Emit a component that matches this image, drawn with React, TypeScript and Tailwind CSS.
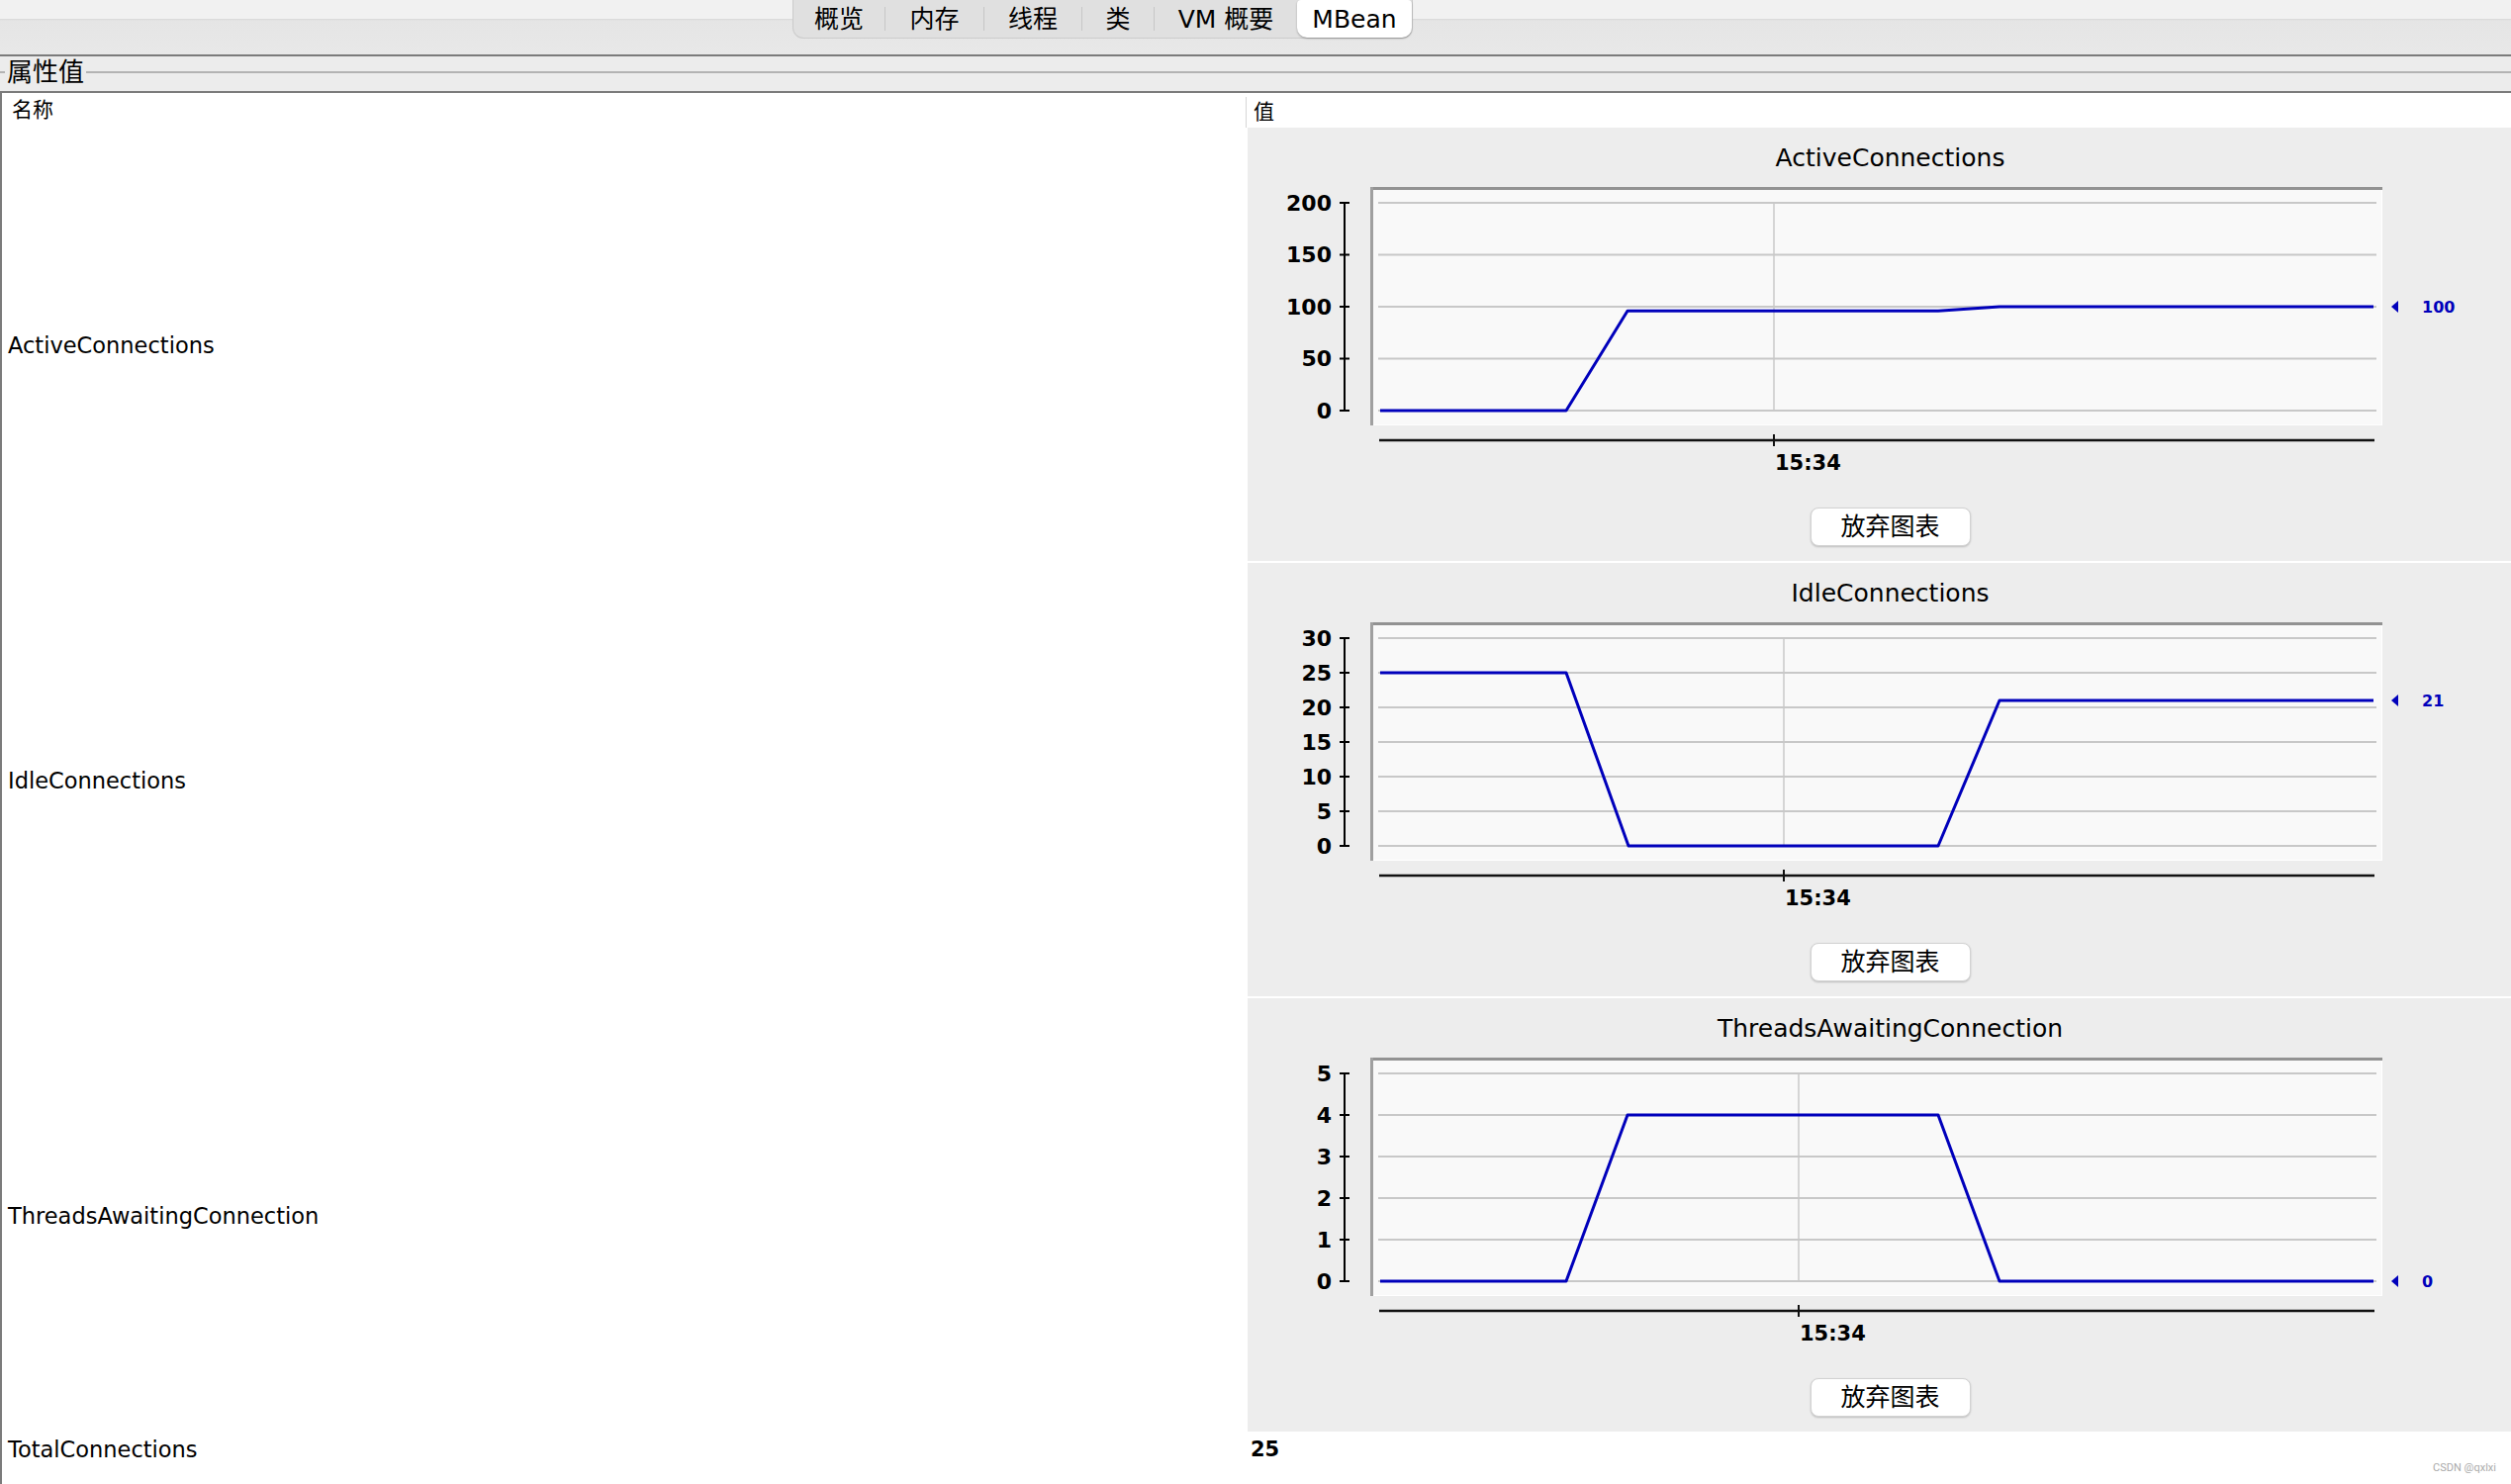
type Chart = {
  title: string;
  max: number;
  ticks: number[];
  vx: number;
  pts: [number, number][];
  last: string;
};

const charts: Chart[] = [
  {
    title: 'ActiveConnections',
    max: 200,
    ticks: [200, 150, 100, 50, 0],
    vx: 532,
    pts: [[134, 0], [322, 0], [384, 96], [698, 96], [760, 100], [1138, 100]],
    last: '100',
  },
  {
    title: 'IdleConnections',
    max: 30,
    ticks: [30, 25, 20, 15, 10, 5, 0],
    vx: 542,
    pts: [[134, 25], [322, 25], [385, 0], [698, 0], [760, 21], [1138, 21]],
    last: '21',
  },
  {
    title: 'ThreadsAwaitingConnection',
    max: 5,
    ticks: [5, 4, 3, 2, 1, 0],
    vx: 557,
    pts: [[134, 0], [322, 0], [384, 4], [698, 4], [760, 0], [1138, 0]],
    last: '0',
  },
];

const tabs = [
  { label: '概览', w: 'w-[92px]' },
  { label: '内存', w: 'w-[99px]' },
  { label: '线程', w: 'w-[98px]' },
  { label: '类', w: 'w-[72px]' },
  { label: 'VM 概要', w: 'w-[144px]' },
];

// plot area: grid from y=16 (max) to y=226 (0)
const yOf = (v: number, max: number) => 226 - (v / max) * 210;

function Plot({ c }: { c: Chart }) {
  const lastY = yOf(c.pts[c.pts.length - 1][1], c.max);
  return (
    <svg width="1277" height="300" className="block">
      {/* plot box */}
      <rect x="124" y="0" width="1023" height="241" fill="#f9f9f9" />
      <line x1="1146.5" y1="0" x2="1146.5" y2="241" stroke="#ffffff" strokeWidth="1" />
      <line x1="124" y1="240.5" x2="1147" y2="240.5" stroke="#ffffff" strokeWidth="1" />
      <line x1="124" y1="1.5" x2="1147" y2="1.5" stroke="#929292" strokeWidth="3" />
      <line x1="125.5" y1="0" x2="125.5" y2="241" stroke="#a0a0a0" strokeWidth="3" />

      {/* grid */}
      {c.ticks.map((t) => (
        <line key={t} x1="132" x2="1141" y1={yOf(t, c.max)} y2={yOf(t, c.max)} stroke="#c8c8c8" strokeWidth="2" />
      ))}
      <line x1={c.vx} x2={c.vx} y1="16" y2="226" stroke="#c8c8c8" strokeWidth="1.5" />

      {/* y axis */}
      <line x1="98" x2="98" y1="16" y2="226" stroke="#000" strokeWidth="2" />
      {c.ticks.map((t) => (
        <g key={t}>
          <line x1="93" x2="103" y1={yOf(t, c.max)} y2={yOf(t, c.max)} stroke="#000" strokeWidth="2" />
          <text
            x="85"
            y={yOf(t, c.max)}
            textAnchor="end"
            dominantBaseline="central"
            fontFamily="DejaVu Sans"
            fontWeight="bold"
            fontSize="22"
            fill="#000"
          >
            {t}
          </text>
        </g>
      ))}

      {/* x axis */}
      <line x1="133" x2="1139" y1="256" y2="256" stroke="#111" strokeWidth="2.5" />
      <line x1={c.vx} x2={c.vx} y1="250" y2="262" stroke="#111" strokeWidth="2" />
      <text
        x={c.vx + 1}
        y="279"
        dominantBaseline="central"
        fontFamily="DejaVu Sans"
        fontWeight="bold"
        fontSize="21"
        fill="#000"
      >
        15:34
      </text>

      {/* data */}
      <polyline
        points={c.pts.map(([x, v]) => `${x},${yOf(v, c.max)}`).join(' ')}
        fill="none"
        stroke="#0000bb"
        strokeWidth="3"
        strokeLinejoin="round"
      />

      {/* current value marker */}
      <polygon points={`1156,${lastY} 1163,${lastY - 6} 1163,${lastY + 6}`} fill="#0000bb" />
      <text
        x="1187"
        y={lastY}
        dominantBaseline="central"
        fontFamily="DejaVu Sans"
        fontWeight="bold"
        fontSize="16"
        fill="#0000bb"
      >
        {c.last}
      </text>
    </svg>
  );
}

function ChartPanel({ c }: { c: Chart }) {
  return (
    <div className="h-[438px] bg-[#ededed]">
      <div className="h-[60px] flex items-center justify-center pl-[22px] text-[25px] leading-none">{c.title}</div>
      <Plot c={c} />
      <div className="mt-[24px] flex justify-center pl-[22px]">
        <button className="w-[162px] h-[39px] bg-white rounded-[8px] border border-[#d2d2d2] shadow-[0_1px_2px_rgba(0,0,0,0.2)] text-[25px] leading-none flex items-center justify-center">
          放弃图表
        </button>
      </div>
    </div>
  );
}

export default function App() {
  return (
    <div className="relative w-[2538px] h-[1500px] overflow-hidden bg-white text-black font-['DejaVu_Sans','Noto_Sans_CJK_SC',sans-serif]">
      {/* tab bar */}
      <div className="h-[55px] bg-[linear-gradient(to_bottom,#f1f1f1_0px,#f1f1f1_19px,#d8d8d8_19px,#e5e5e5_21px,#e8e8e8_55px)]">
        <div className="ml-[801px] w-[627px] h-[39px] flex items-center rounded-b-[11px] bg-[#e0e0e0] border border-t-0 border-[#cbcbcb]">
          {tabs.map((t, i) => (
            <div key={t.label} className="flex items-center">
              {i > 0 && <div className="w-px h-[24px] bg-[#c6c6c6]" />}
              <div className={`${t.w} flex justify-center text-[25px] leading-none`}>{t.label}</div>
            </div>
          ))}
          <div className="w-[117px] h-[38px] self-start bg-white rounded-b-[10px] rounded-t-[4px] shadow-[0_1px_2px_rgba(0,0,0,0.3)] flex items-center justify-center text-[25px] leading-none">
            MBean
          </div>
        </div>
      </div>

      {/* group header */}
      <div className="h-[39px] border-t-2 border-b-2 border-[#7b7b7b] bg-[#ececec] flex items-center pb-[4px]">
        <div className="w-[5px] h-[2px] bg-[#b3b3b3]" />
        <span className="px-[2px] text-[26px] leading-none">属性值</span>
        <div className="flex-1 h-[2px] bg-[#b3b3b3]" />
      </div>

      {/* attribute table */}
      <div className="border-l-2 border-[#7b7b7b] h-[1406px]">
        <div className="grid grid-cols-[1257px_1fr] h-[35px]">
          <div className="pl-[10px] flex items-center text-[21px] leading-none">名称</div>
          <div className="mt-[4px] border-l border-[#d6d6d6] pl-[7px] flex items-center text-[21px] leading-none">值</div>
        </div>

        {charts.map((c) => (
          <div key={c.title} className="grid grid-cols-[1257px_1fr] h-[440px]">
            <div className="pl-[6px] flex items-center text-[22.5px] leading-none">{c.title}</div>
            <div className="pl-[2px] pb-[2px]">
              <ChartPanel c={c} />
            </div>
          </div>
        ))}

        <div className="grid grid-cols-[1257px_1fr] h-[32px]">
          <div className="pl-[6px] flex items-center text-[22.5px] leading-none">TotalConnections</div>
          <div className="pl-[5px] flex items-center text-[21px] font-bold leading-none">25</div>
        </div>
      </div>

      {/* watermark */}
      <div className="absolute right-[15px] bottom-[8px] text-[11px] text-[#aaaaaa] font-['Roboto',sans-serif]">
        CSDN @qxlxi
      </div>
    </div>
  );
}
